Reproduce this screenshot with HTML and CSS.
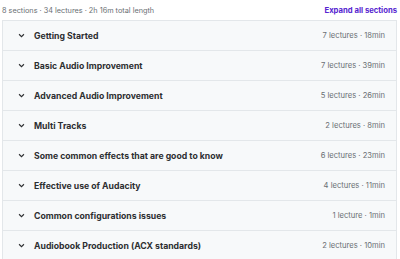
FILE: index.html
```html
<!DOCTYPE html>
<html lang="en">
<head>
    <meta charset="UTF-8">
    <meta name="viewport" content="width=device-width, initial-scale=1.0">
    <title>Course content</title>
    <link rel="stylesheet" href="styles.css">
</head>
<body>
    <div class="content">
        <div class="summary">
            <span class="meta">8 sections · 34 lectures · 2h 16m total length</span>
            <button class="expand">Expand all sections</button>
        </div>
        <div class="sections">
            <div class="section">
                <svg class="chevron" viewBox="0 0 10 6"><path d="M1.5 1.2 L5 4.6 L8.5 1.2"/></svg>
                <span class="title">Getting Started</span>
                <span class="info">7 lectures · 18min</span>
            </div>
            <div class="section">
                <svg class="chevron" viewBox="0 0 10 6"><path d="M1.5 1.2 L5 4.6 L8.5 1.2"/></svg>
                <span class="title">Basic Audio Improvement</span>
                <span class="info">7 lectures · 39min</span>
            </div>
            <div class="section">
                <svg class="chevron" viewBox="0 0 10 6"><path d="M1.5 1.2 L5 4.6 L8.5 1.2"/></svg>
                <span class="title">Advanced Audio Improvement</span>
                <span class="info">5 lectures · 26min</span>
            </div>
            <div class="section">
                <svg class="chevron" viewBox="0 0 10 6"><path d="M1.5 1.2 L5 4.6 L8.5 1.2"/></svg>
                <span class="title">Multi Tracks</span>
                <span class="info">2 lectures · 8min</span>
            </div>
            <div class="section">
                <svg class="chevron" viewBox="0 0 10 6"><path d="M1.5 1.2 L5 4.6 L8.5 1.2"/></svg>
                <span class="title">Some common effects that are good to know</span>
                <span class="info">6 lectures · 23min</span>
            </div>
            <div class="section">
                <svg class="chevron" viewBox="0 0 10 6"><path d="M1.5 1.2 L5 4.6 L8.5 1.2"/></svg>
                <span class="title">Effective use of Audacity</span>
                <span class="info">4 lectures · 11min</span>
            </div>
            <div class="section">
                <svg class="chevron" viewBox="0 0 10 6"><path d="M1.5 1.2 L5 4.6 L8.5 1.2"/></svg>
                <span class="title">Common configurations issues</span>
                <span class="info">1 lecture · 1min</span>
            </div>
            <div class="section">
                <svg class="chevron" viewBox="0 0 10 6"><path d="M1.5 1.2 L5 4.6 L8.5 1.2"/></svg>
                <span class="title">Audiobook Production (ACX standards)</span>
                <span class="info">2 lectures · 10min</span>
            </div>
        </div>
    </div>
</body>
</html>
```

FILE: styles.css
```css
body {
    margin: 0;
    padding: 0;
    background-color: #ffffff;
    font-family: Inter, "Liberation Sans", Arial, sans-serif;
    color: #2d2f31;
}

.content {
    padding: 0 3px 0 2px;
}

.summary {
    display: flex;
    justify-content: space-between;
    align-items: center;
    height: 20px;
}

.meta {
    font-size: 7.3px;
    color: #6a6f73;
}

.expand {
    background: none;
    border: none;
    padding: 0;
    font-family: inherit;
    font-size: 7.7px;
    font-weight: 700;
    color: #5624d0;
    cursor: pointer;
}

.sections {
    border: 1px solid #e3e7ea;
    border-bottom: none;
}

.section {
    display: flex;
    align-items: center;
    height: 29px;
    padding: 0 11px 0 15px;
    background-color: #f7f9fa;
    border-bottom: 1px solid #e3e7ea;
}

.chevron {
    width: 7px;
    height: 5px;
    margin-right: 9px;
    fill: none;
    stroke: #2d2f31;
    stroke-width: 1.6;
}

.title {
    flex: 1;
    font-size: 8.7px;
    font-weight: 700;
    white-space: nowrap;
}

.info {
    font-size: 7.6px;
    color: #6a6f73;
    white-space: nowrap;
}
```
